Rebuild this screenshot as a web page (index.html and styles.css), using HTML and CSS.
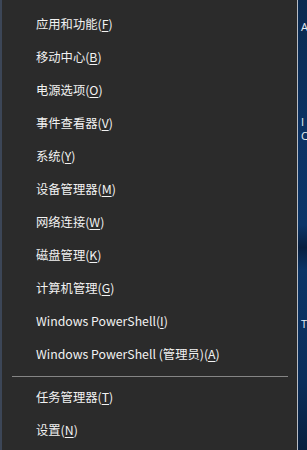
FILE: index.html
```html
<!DOCTYPE html>
<html>
<head>
<meta charset="utf-8">
<link rel="stylesheet" href="styles.css">
</head>
<body>
<div class="screen">
  <div class="edge"></div>
  <div class="menu">
    <div class="item">应用和功能(<u>F</u>)</div>
    <div class="item">移动中心(<u>B</u>)</div>
    <div class="item">电源选项(<u>O</u>)</div>
    <div class="item">事件查看器(<u>V</u>)</div>
    <div class="item">系统(<u>Y</u>)</div>
    <div class="item">设备管理器(<u>M</u>)</div>
    <div class="item">网络连接(<u>W</u>)</div>
    <div class="item">磁盘管理(<u>K</u>)</div>
    <div class="item">计算机管理(<u>G</u>)</div>
    <div class="item">Windows PowerShell(<u>I</u>)</div>
    <div class="item">Windows PowerShell (管理员)(<u>A</u>)</div>
    <div class="sep"></div>
    <div class="item">任务管理器(<u>T</u>)</div>
    <div class="item">设置(<u>N</u>)</div>
  </div>
  <div class="border"></div>
  <div class="desktop">
    <span class="glyph g1">A</span>
    <span class="glyph g2">I</span>
    <span class="glyph g3">C</span>
    <span class="glyph g4">T</span>
  </div>
</div>
</body>
</html>
```
FILE: styles.css
```css
html, body {
  margin: 0;
  padding: 0;
  background: #0b2b52;
}
.screen {
  display: flex;
  width: 307px;
  height: 450px;
  overflow: hidden;
}
.edge {
  width: 2px;
  background: #3c4657;
  flex: none;
}
.menu {
  width: 295px;
  flex: none;
  background: #2b2b2b;
  padding-top: 8px;
  box-sizing: border-box;
  font-family: "Noto Sans CJK SC", "Open Sans", sans-serif;
  font-size: 12.3px;
  color: #f2f2f2;
}
.item {
  height: 33px;
  line-height: 33px;
  padding-left: 34px;
  white-space: nowrap;
}
.item u {
  text-decoration: underline;
  text-underline-offset: 2px;
}
.sep {
  height: 1px;
  background: #858585;
  margin: 5px 9px 4px 10px;
}
.border {
  width: 1px;
  flex: none;
  background: #b8bcc4;
}
.desktop {
  flex: 1;
  position: relative;
  background: linear-gradient(180deg, #0a2a50 0%, #0c3264 30%, #0b3568 50%, #071f40 55%, #0b3466 60%, #0a2d5a 85%, #081f3e 100%);
}
.glyph {
  position: absolute;
  left: 3px;
  font-family: "Open Sans", sans-serif;
  font-size: 11px;
  line-height: 12px;
  color: #e8eef6;
}
.g1 { top: 21px; }
.g2 { top: 116px; }
.g3 { top: 130px; }
.g4 { top: 318px; }
```
